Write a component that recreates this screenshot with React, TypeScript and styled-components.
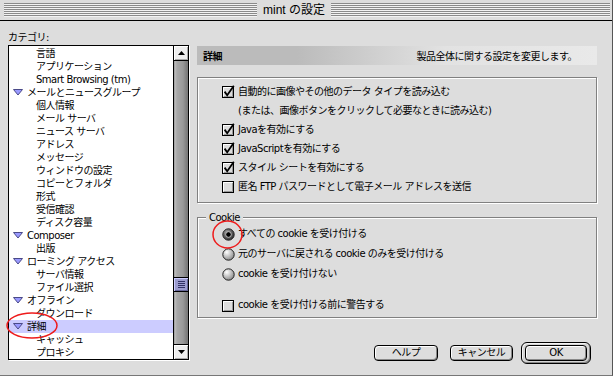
import React from 'react';
import styled, { createGlobalStyle } from 'styled-components';

const GlobalStyle = createGlobalStyle`
  html, body {
    margin: 0;
    padding: 0;
    background: #dddddd;
  }
  body {
    font-family: "DejaVu Sans", "Noto Sans CJK JP", sans-serif;
    font-size: 10px;
    letter-spacing: -0.5px;
    color: #000;
  }
`;

const Window = styled.div`
  position: relative;
  width: 612px;
  height: 375px;
  background: #dddddd;
  border-right: 1px solid #555;
  border-bottom: 1px solid #777;
  display: flex;
  flex-direction: column;
  overflow: hidden;
`;

const TitleBar = styled.div`
  height: 20px;
  flex: none;
  border-bottom: 1px solid #000;
  display: flex;
  align-items: center;
  padding: 0 2px 0 4px;
`;

const Stripes = styled.div<{ $width?: number }>`
  height: 14px;
  flex: ${(p) => (p.$width ? `0 0 ${p.$width}px` : '1')};
  background: repeating-linear-gradient(to bottom, #8a8a8a 0 1px, #f2f2f2 1px 2px);
`;

const Title = styled.div`
  margin: 0 6px;
  font-family: "Liberation Sans", "Noto Sans CJK JP", sans-serif;
  font-size: 12px;
  letter-spacing: 0;
  line-height: 20px;
`;

const Body = styled.div`
  flex: 1;
  display: grid;
  grid-template-columns: 181px 400px;
  grid-template-rows: 14px auto;
  column-gap: 8px;
  align-items: start;
  padding: 10px 0 0 8px;
`;

const CategoryLabel = styled.div`
  grid-column: 1;
  grid-row: 1;
  line-height: 14px;
`;

const ListBox = styled.div`
  grid-column: 1;
  grid-row: 2;
  height: 315px;
  box-sizing: border-box;
  border: 1px solid #000;
  background: #fff;
  display: flex;
  box-shadow: 1px 1px 0 #fff;
`;

const ListRows = styled.div`
  flex: 1;
  padding-top: 1px;
  overflow: hidden;
`;

const ListRow = styled.div<{ $level: number; $selected?: boolean }>`
  height: 13px;
  display: flex;
  align-items: center;
  gap: 4px;
  padding-left: ${(p) => (p.$level === 0 ? 4 : 27)}px;
  background: ${(p) => (p.$selected ? '#ccccff' : 'transparent')};
  line-height: 13px;
  white-space: nowrap;
`;

const ScrollBar = styled.div`
  width: 14px;
  flex: none;
  border-left: 1px solid #000;
  display: flex;
  flex-direction: column;
`;

const ArrowButton = styled.div<{ $down?: boolean }>`
  height: 14px;
  flex: none;
  display: flex;
  align-items: center;
  justify-content: center;
  background: #eeeeee;
  box-shadow: inset 1px 1px 0 #fff, inset -1px -1px 0 #aaa;
  ${(p) => (p.$down ? 'border-top: 1px solid #000;' : 'border-bottom: 1px solid #000;')}
`;

const Track = styled.div`
  flex: 1;
  background: linear-gradient(to right, #8c8c8c 0, #bdbdbd 1px, #a8a8a8 3px, #999 9px, #7a7a7a 13px);
`;

const Thumb = styled.div`
  height: 15px;
  box-sizing: border-box;
  border-top: 1px solid #000;
  border-bottom: 1px solid #000;
  background: #9c9ccf;
  box-shadow: inset 1px 1px 0 #ccccff, inset -1px -1px 0 #666699;
  display: flex;
  flex-direction: column;
  align-items: center;
  justify-content: center;
  gap: 1px;
`;

const Grip = styled.div`
  width: 7px;
  height: 1px;
  background: #333366;
`;

const RightPanel = styled.div`
  grid-column: 2;
  grid-row: 2;
  margin-top: 1px;
  display: flex;
  flex-direction: column;
`;

const Header = styled.div`
  height: 19px;
  display: flex;
  align-items: center;
  justify-content: space-between;
  padding: 0 20px 0 6px;
  background: linear-gradient(to right, #bbbbbb 0%, #bbbbbb 25%, #e2e2e2 62%, #e9e9e9 100%);
`;

const HeaderTitle = styled.span`
  font-weight: bold;
`;

const GroupBox = styled.div`
  margin-top: 12px;
  height: 126px;
  box-sizing: border-box;
  border: 1px solid #808080;
  box-shadow: inset 1px 1px 0 #fff, 1px 1px 0 #fff;
  padding: 4px 0 0 24px;
`;

const Fieldset = styled.fieldset`
  margin: 8px 0 0;
  padding: 0 0 2px;
  min-inline-size: 0;
  border: 1px solid #808080;
  box-shadow: inset 1px 1px 0 #fff, 1px 1px 0 #fff;
`;

const Legend = styled.legend`
  margin-left: 8px;
  padding: 0 3px;
  line-height: 13px;
  background: #dddddd;
`;

const FieldBody = styled.div`
  padding-left: 24px;
`;

const OptionRow = styled.div<{ $gapTop?: number }>`
  display: flex;
  align-items: flex-start;
  gap: 3px;
  line-height: 19px;
  margin-top: ${(p) => p.$gapTop ?? 0}px;

  svg {
    flex: none;
    margin-top: 3px;
  }
`;

const RadioRow = styled(OptionRow)`
  line-height: 20px;

  svg {
    margin-top: 4px;
  }
`;

const ButtonRow = styled.div`
  margin-top: 24px;
  display: flex;
  justify-content: flex-end;
  align-items: center;
  gap: 8px;
  padding-right: 6px;

  & > :first-child {
    margin-right: 4px;
  }
`;

const PushButton = styled.button<{ $width: number }>`
  width: ${(p) => p.$width}px;
  height: 16px;
  padding: 0;
  border: 1px solid #000;
  border-radius: 4px;
  background: #dddddd;
  box-shadow: inset 1px 1px 0 #fff, inset -1px -1px 0 #888;
  font: inherit;
  letter-spacing: inherit;
  line-height: 14px;
  color: #000;
`;

const DefaultRing = styled.div`
  padding: 2px 3px;
  border: 1px solid #000;
  border-radius: 6px;
  background: #d4d4d4;
  box-shadow: inset 1px 1px 0 #f4f4f4, inset -1px -1px 0 #888;
  display: flex;
`;

const Marks = styled.svg`
  position: absolute;
  left: 0;
  top: 0;
  pointer-events: none;
`;

type Row = { label: string; level: 0 | 1; selected?: boolean };

const rows: Row[] = [
  { label: '言語', level: 1 },
  { label: 'アプリケーション', level: 1 },
  { label: 'Smart Browsing (tm)', level: 1 },
  { label: 'メールとニュースグループ', level: 0 },
  { label: '個人情報', level: 1 },
  { label: 'メール サーバ', level: 1 },
  { label: 'ニュース サーバ', level: 1 },
  { label: 'アドレス', level: 1 },
  { label: 'メッセージ', level: 1 },
  { label: 'ウィンドウの設定', level: 1 },
  { label: 'コピーとフォルダ', level: 1 },
  { label: '形式', level: 1 },
  { label: '受信確認', level: 1 },
  { label: 'ディスク容量', level: 1 },
  { label: 'Composer', level: 0 },
  { label: '出版', level: 1 },
  { label: 'ローミング アクセス', level: 0 },
  { label: 'サーバ情報', level: 1 },
  { label: 'ファイル選択', level: 1 },
  { label: 'オフライン', level: 0 },
  { label: 'ダウンロード', level: 1 },
  { label: '詳細', level: 0, selected: true },
  { label: 'キャッシュ', level: 1 },
  { label: 'プロキシ', level: 1 },
];

function Disclosure() {
  return (
    <svg width="10" height="7" viewBox="0 0 10 7">
      <polygon points="0.5,0.5 9.5,0.5 5,6" fill="#9999ff" stroke="#4a4a88" strokeWidth="1" />
    </svg>
  );
}

function Arrow({ down }: { down?: boolean }) {
  return (
    <svg width="7" height="4" viewBox="0 0 7 4">
      <polygon points={down ? '0,0 7,0 3.5,4' : '0,4 7,4 3.5,0'} fill="#000" />
    </svg>
  );
}

function CheckBox({ checked }: { checked?: boolean }) {
  return (
    <svg width="13" height="13" viewBox="0 0 13 13">
      <rect x="0.5" y="1.5" width="11" height="11" fill="#dcdcdc" stroke="#000" />
      <path d="M1.5 11 V2.5 H10.5" stroke="#fff" fill="none" />
      <path d="M2 11.5 H10.5 V3" stroke="#999" fill="none" />
      {checked && (
        <path d="M2.6 6.6 L5.2 10.2 L11.8 0.8" stroke="#000" strokeWidth="1.8" fill="none" />
      )}
    </svg>
  );
}

function Radio({ on }: { on?: boolean }) {
  return (
    <svg width="13" height="13" viewBox="0 0 13 13">
      <defs>
        <radialGradient id={on ? 'rOn' : 'rOff'} cx="0.35" cy="0.3" r="0.75">
          <stop offset="0" stopColor={on ? '#999' : '#fff'} />
          <stop offset="1" stopColor={on ? '#333' : '#888'} />
        </radialGradient>
      </defs>
      <circle cx="6.5" cy="6.5" r="5.7" fill={`url(#${on ? 'rOn' : 'rOff'})`} stroke="#222" strokeWidth="1" />
      {on && <circle cx="6.5" cy="6.5" r="2.8" fill="#000" stroke="#ccc" strokeWidth="0.9" />}
    </svg>
  );
}

export default function App() {
  const trackHeight = 283;
  const thumbHeight = 15;
  const scrollRatio = 0.806;
  const thumbTop = Math.round(scrollRatio * (trackHeight - thumbHeight));

  return (
    <>
      <GlobalStyle />
      <Window>
        <TitleBar>
          <Stripes $width={253} />
          <Title>mint の設定</Title>
          <Stripes />
        </TitleBar>
        <Body>
          <CategoryLabel>カテゴリ:</CategoryLabel>
          <ListBox>
            <ListRows>
              {rows.map((r) => (
                <ListRow key={r.label} $level={r.level} $selected={r.selected}>
                  {r.level === 0 && <Disclosure />}
                  <span>{r.label}</span>
                </ListRow>
              ))}
            </ListRows>
            <ScrollBar>
              <ArrowButton>
                <Arrow />
              </ArrowButton>
              <Track>
                <Thumb style={{ marginTop: thumbTop }}>
                  <Grip />
                  <Grip />
                  <Grip />
                  <Grip />
                </Thumb>
              </Track>
              <ArrowButton $down>
                <Arrow down />
              </ArrowButton>
            </ScrollBar>
          </ListBox>
          <RightPanel>
            <Header>
              <HeaderTitle>詳細</HeaderTitle>
              <span>製品全体に関する設定を変更します。</span>
            </Header>
            <GroupBox>
              <OptionRow>
                <CheckBox checked />
                <span>
                  自動的に画像やその他のデータ タイプを読み込む
                  <br />
                  (または、画像ボタンをクリックして必要なときに読み込む)
                </span>
              </OptionRow>
              <OptionRow>
                <CheckBox checked />
                <span>Javaを有効にする</span>
              </OptionRow>
              <OptionRow>
                <CheckBox checked />
                <span>JavaScriptを有効にする</span>
              </OptionRow>
              <OptionRow>
                <CheckBox checked />
                <span>スタイル シートを有効にする</span>
              </OptionRow>
              <OptionRow>
                <CheckBox />
                <span>匿名 FTP パスワードとして電子メール アドレスを送信</span>
              </OptionRow>
            </GroupBox>
            <Fieldset>
              <Legend>Cookie</Legend>
              <FieldBody>
                <RadioRow>
                  <Radio on />
                  <span>すべての cookie を受け付ける</span>
                </RadioRow>
                <RadioRow>
                  <Radio />
                  <span>元のサーバに戻される cookie のみを受け付ける</span>
                </RadioRow>
                <RadioRow>
                  <Radio />
                  <span>cookie を受け付けない</span>
                </RadioRow>
                <RadioRow $gapTop={11}>
                  <CheckBox />
                  <span>cookie を受け付ける前に警告する</span>
                </RadioRow>
              </FieldBody>
            </Fieldset>
            <ButtonRow>
              <PushButton $width={64}>ヘルプ</PushButton>
              <PushButton $width={63}>キャンセル</PushButton>
              <DefaultRing>
                <PushButton $width={62}>OK</PushButton>
              </DefaultRing>
            </ButtonRow>
          </RightPanel>
        </Body>
        <Marks width="612" height="375">
          <ellipse cx="227.5" cy="234.5" rx="14.5" ry="13.5" fill="none" stroke="#ee1c1c" strokeWidth="1.5" />
          <ellipse cx="32" cy="325.5" rx="25" ry="12.5" fill="none" stroke="#ee1c1c" strokeWidth="1.5" />
        </Marks>
      </Window>
    </>
  );
}
